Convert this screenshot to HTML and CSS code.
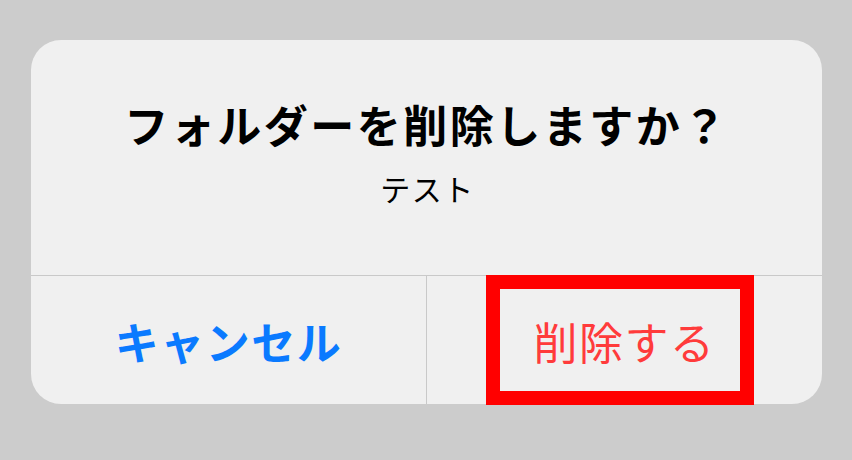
FILE: index.html
```html
<!DOCTYPE html>
<html lang="ja">
<head>
    <meta charset="UTF-8">
    <meta name="viewport" content="width=device-width, initial-scale=1.0">
    <title>フォルダーを削除</title>
    <link rel="stylesheet" href="styles.css">
</head>
<body>

    <div class="alert">
        <div class="alert-body">
            <h1 class="alert-title">フォルダーを削除しますか？</h1>
            <p class="alert-message">テスト</p>
        </div>
        <div class="alert-actions">
            <button class="action cancel">キャンセル</button>
            <button class="action destructive">削除する</button>
        </div>
        <!-- 注釈の赤枠 -->
        <div class="highlight"></div>
    </div>

</body>
</html>
```

FILE: styles.css
```css
:root {
    --page-color: #cccccc;
    --alert-color: #f0f0f0;
    --divider-color: #c9c9c9;
    --blue: #0a7aff;
    --red: #ff3b3b;
}
body {
    margin: 0;
    padding: 40px 30px 0 31px;
    background-color: var(--page-color);
    font-family: "Noto Sans CJK JP", "Noto Sans", sans-serif;
    min-height: 100vh;
    box-sizing: border-box;
}
.alert {
    position: relative;
    width: 791px;
    background-color: var(--alert-color);
    border-radius: 30px;
}
.alert-body {
    display: flex;
    flex-direction: column;
    align-items: center;
    height: 236px;
    padding-top: 58px;
    box-sizing: border-box;
    border-bottom: 1px solid var(--divider-color);
}
.alert-title {
    margin: 0;
    font-size: 44px;
    line-height: 52px;
    font-weight: 700;
    letter-spacing: 2.5px;
    color: #000;
}
.alert-message {
    margin: 20px 0 0 2px;
    font-size: 30px;
    line-height: 36px;
    letter-spacing: 1.5px;
    color: #000;
}
.alert-actions {
    display: grid;
    grid-template-columns: 396px 1fr;
    height: 128px;
}
.action {
    border: none;
    background: none;
    font-family: inherit;
    font-size: 44px;
    letter-spacing: 1.5px;
    padding: 2px 0 0;
    cursor: pointer;
}
.cancel {
    color: var(--blue);
    font-weight: 700;
    border-right: 1px solid var(--divider-color);
}
.destructive {
    color: var(--red);
    font-weight: 400;
}
.highlight {
    position: absolute;
    left: 455px;
    top: 235px;
    width: 268px;
    height: 130px;
    border: 14px solid #ff0000;
    box-sizing: border-box;
}
```
